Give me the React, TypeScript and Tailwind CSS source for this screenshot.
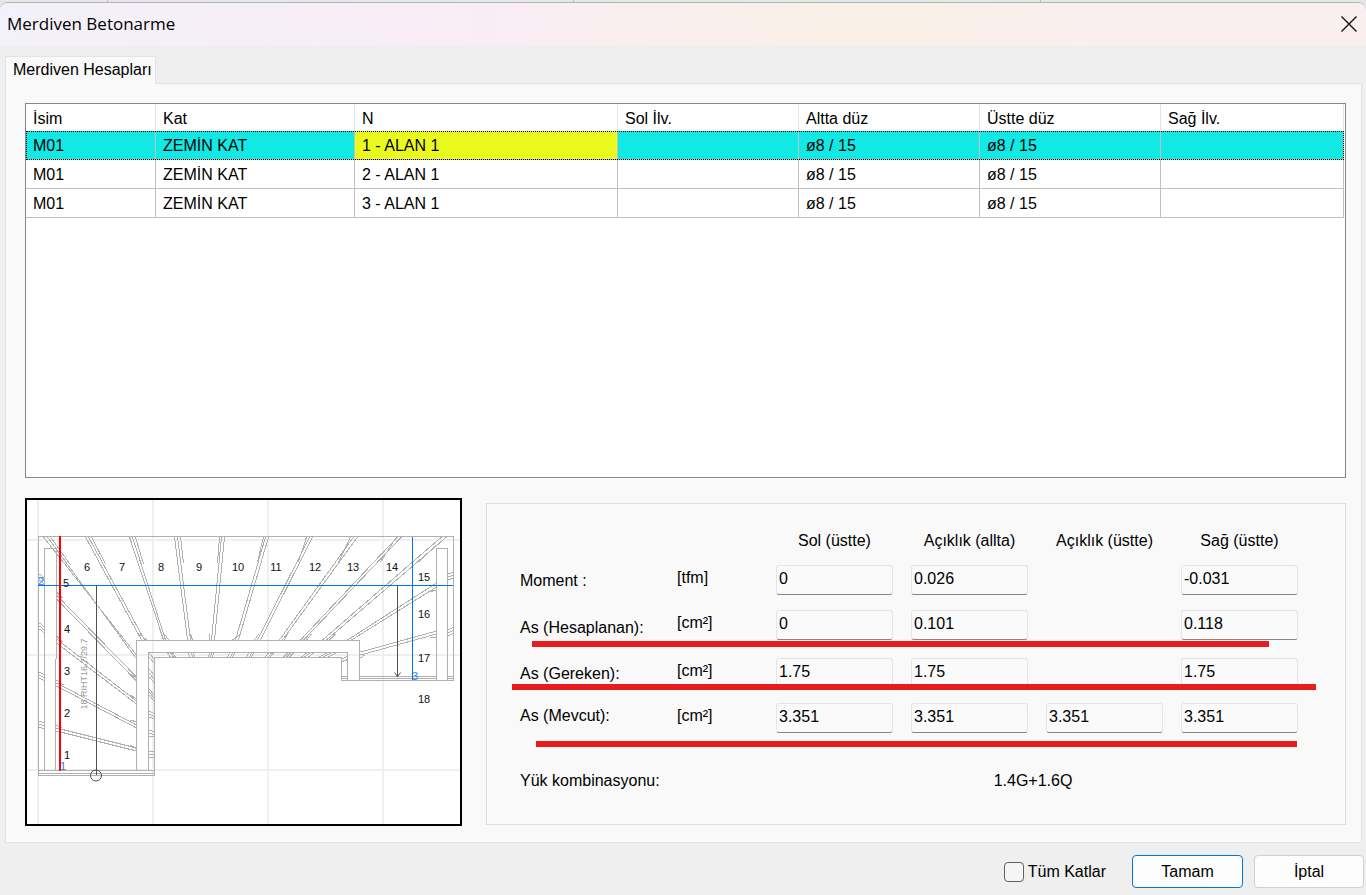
import React from 'react';
import { clsx } from 'clsx';

const COLUMNS = [
  { title: 'İsim', width: 'w-[130px]' },
  { title: 'Kat', width: 'w-[199px]' },
  { title: 'N', width: 'w-[263px]' },
  { title: 'Sol İlv.', width: 'w-[181px]' },
  { title: 'Altta düz', width: 'w-[181px]' },
  { title: 'Üstte düz', width: 'w-[181px]' },
  { title: 'Sağ İlv.', width: '' },
];

const ROWS = [
  ['M01', 'ZEMİN KAT', '1 - ALAN 1', '', 'ø8 / 15', 'ø8 / 15', ''],
  ['M01', 'ZEMİN KAT', '2 - ALAN 1', '', 'ø8 / 15', 'ø8 / 15', ''],
  ['M01', 'ZEMİN KAT', '3 - ALAN 1', '', 'ø8 / 15', 'ø8 / 15', ''],
];

const SECTIONS = ['Sol (üstte)', 'Açıklık (allta)', 'Açıklık (üstte)', 'Sağ (üstte)'];

const RESULTS = [
  { id: 'moment', label: 'Moment :', unit: '[tfm]', values: ['0', '0.026', null, '-0.031'], align: 'self-center', row: 'mt-3' },
  { id: 'hesaplanan', label: 'As (Hesaplanan):', unit: '[cm²]', values: ['0', '0.101', null, '0.118'], align: 'self-end', row: 'mt-[15px]' },
  { id: 'gereken', label: 'As (Gereken):', unit: '[cm²]', values: ['1.75', '1.75', null, '1.75'], align: 'self-center', row: 'mt-[18px]' },
  { id: 'mevcut', label: 'As (Mevcut):', unit: '[cm²]', values: ['3.351', '3.351', '3.351', '3.351'], align: 'self-start', row: 'mt-[15px]' },
];

const GRID = 'grid grid-cols-[139px_81px_repeat(4,minmax(0,117px))] gap-x-[18px]';

// Edges of the stair treads: [x1, y1, x2, y2]
const TREADS = [
  // upper flight
  [43, 537, 136, 655], [47, 537, 136, 659], [50, 537, 70, 565],
  [85, 537, 141, 640], [88, 537, 144, 640], [91, 537, 105, 564], [139, 634, 146, 640],
  [129, 537, 163, 640], [132, 537, 165, 640], [135, 537, 143, 564], [164, 634, 168, 640],
  [174, 537, 187, 640], [177, 537, 190, 640], [180, 537, 183, 563], [190, 634, 192, 640],
  [221, 537, 211, 640], [224, 537, 214, 640], [219, 537, 217, 563], [209, 634, 209, 640],
  [265, 537, 235, 640], [268, 537, 238, 640], [263, 537, 257, 562], [240, 634, 232, 640],
  [309, 537, 257, 640], [312, 537, 260, 640], [306, 537, 298, 562], [254, 640, 258, 634],
  [353, 537, 279, 640], [357, 537, 282, 640], [350, 537, 338, 562], [284, 640, 287, 634],
  [397, 537, 300, 640], [401, 537, 303, 640], [394, 540, 380, 562], [306, 640, 311, 634],
  [441, 537, 322, 640], [446, 537, 326, 640], [436, 545, 418, 562], [329, 640, 335, 634],
  // right flight
  [436, 583, 347, 640], [436, 587, 351, 640], [436, 590, 428, 592],
  [436, 631, 360, 652], [436, 634, 360, 655], [436, 637, 430, 638], [360, 658, 364, 655],
  [448, 574, 453, 572], [448, 577, 453, 575], [448, 580, 453, 578],
  [448, 630, 453, 627], [448, 633, 453, 630], [448, 636, 453, 633],
  // left flight
  [56, 595, 136, 677], [56, 599, 136, 681], [56, 592, 62, 598], [130, 674, 136, 678],
  [56, 639, 136, 701], [56, 643, 136, 704], [56, 636, 62, 642], [130, 695, 136, 699],
  [56, 683, 136, 725], [56, 686, 136, 728], [56, 680, 63, 685], [130, 720, 136, 722],
  [56, 728, 136, 748], [56, 731, 136, 751], [56, 725, 61, 728], [130, 745, 136, 749],
  [39, 574, 44, 578], [39, 577, 44, 581], [39, 580, 44, 584],
  [39, 623, 44, 627], [39, 626, 44, 630], [39, 629, 44, 633],
  [39, 672, 44, 675], [39, 675, 44, 678], [39, 678, 44, 681],
  [39, 721, 44, 723], [39, 724, 44, 726], [39, 727, 44, 729],
  // slab band
  [149, 653, 154, 660], [149, 657, 154, 664],
  [149, 669, 154, 676], [149, 673, 154, 680], [149, 677, 154, 683],
  [149, 689, 154, 696], [149, 692, 154, 699], [149, 695, 154, 702],
  [149, 711, 154, 714], [149, 714, 154, 717], [149, 717, 154, 719],
  [149, 730, 154, 732], [149, 733, 154, 735], [149, 736, 154, 737],
  [149, 751, 154, 752], [149, 754, 154, 755], [149, 757, 154, 758],
  [167, 653, 170, 657], [170, 653, 173, 657], [172, 653, 175, 657],
  [188, 653, 189, 657], [191, 653, 192, 657], [193, 653, 194, 657],
  [209, 653, 208, 657], [211, 653, 210, 657], [213, 653, 212, 657],
  [229, 653, 227, 657], [232, 653, 230, 657], [234, 653, 232, 657],
  [248, 653, 246, 657], [251, 653, 249, 657], [253, 653, 251, 657],
  [268, 653, 265, 657], [271, 653, 268, 657], [273, 653, 270, 657],
  [287, 653, 283, 657], [290, 653, 286, 657], [293, 653, 289, 657],
  [306, 653, 301, 657], [309, 653, 304, 657], [313, 653, 308, 657],
  [326, 653, 319, 657], [330, 653, 323, 657], [335, 653, 328, 657],
  [342, 659, 347, 656], [342, 662, 347, 659], [342, 660, 347, 660],
];

const STEP_LABELS: [string, number, number][] = [
  ['1', 67, 759], ['2', 67, 717], ['3', 67, 675], ['4', 67, 633], ['5', 66, 587],
  ['6', 87, 571], ['7', 122, 571], ['8', 161, 571], ['9', 199, 571], ['10', 238, 571],
  ['11', 276, 571], ['12', 315, 571], ['13', 353, 571], ['14', 392, 571],
  ['15', 424, 581], ['16', 424, 618], ['17', 424, 662], ['18', 424, 703],
];

const StairPlan: React.FC = () => (
  <svg viewBox="27 500 433 324" className="block w-full" role="img" aria-label="Merdiven planı">
    <path d="M38 500V824M153 500V824M268 500V824M383 500V824M27 540H460M27 655H460M27 770H460" stroke="#efefef" strokeWidth="2" />

    <g stroke="#b0b0b0" strokeWidth="1" fill="none" shapeRendering="crispEdges">
      {TREADS.map(([x1, y1, x2, y2], i) => (
        <line key={i} x1={x1 + 0.5} y1={y1} x2={x2 + 0.5} y2={y2} />
      ))}
      {/* outer edge */}
      <path d="M154.5 775.5H38.5V536.5H453.5V680.5H341.5V657.5H154.5V775.5" />
      <path d="M38.5 770.5H154.5M38.5 773.5H154.5" />
      <path d="M341.5 676.5H347.5M341.5 678.5H347.5M359.5 676.5H436.5M359.5 678.5H436.5M447.5 676.5H453.5M447.5 678.5H453.5" />
      {/* stringers */}
      <path d="M44.5 770V548.5H56.5V658L55.5 660V770" />
      <path d="M136.5 770V640.5H359.5V680" />
      <path d="M148.5 770V652.5H347.5V680" />
      <path d="M436.5 680V548.5H447.5V680" />
    </g>

    <g stroke="#505050" fill="none">
      <path d="M96.5 586V775M397.5 586V677" />
      <circle cx="96" cy="775.5" r="5.5" />
      <path d="M394.5 672.5L397.5 676.5L400.5 672.5" />
    </g>

    <path d="M38 585.5H453M412.5 537V680" stroke="#0070ff" />
    <path d="M60 536V771" stroke="#ff0000" strokeWidth="2" />

    <g className="font-['Liberation_Sans',Arial,sans-serif]" fontSize="11" textAnchor="middle">
      {STEP_LABELS.map(([label, x, y]) => (
        <text key={label} x={x} y={y} fill="#111111">{label}</text>
      ))}
      <g fill="#2a7ff0">
        <text x="41" y="585">2</text>
        <text x="63" y="770">1</text>
        <text x="415" y="680">3</text>
      </g>
      <text transform="translate(87 674) rotate(-90)" fontSize="9" fill="#999999">18 RIHT16.7/29.7</text>
    </g>
  </svg>
);

const ReinforcementTable: React.FC = () => (
  <div className="flex-1 border border-[#828790] bg-white pr-px">
    <table className="w-full table-fixed border-separate border-spacing-0 text-left">
      <thead>
        <tr className="h-[27px]">
          {COLUMNS.map((col) => (
            <th key={col.title} className={clsx('border-r border-[#e5e5e5] pt-0.5 pl-[7px] font-normal', col.width)}>
              {col.title}
            </th>
          ))}
        </tr>
      </thead>
      <tbody>
        {ROWS.map((row, r) => (
          <tr
            key={r}
            className={clsx('h-[29px]', r === 0 && 'bg-[#12e8e4] outline-1 -outline-offset-1 outline-dotted outline-black')}
          >
            {row.map((cell, c) => (
              <td
                key={c}
                className={clsx('border-r border-b border-[#c0c0c0] pt-0.5 pl-[7px]', r === 0 && c === 2 && 'bg-[#ebfa1e]')}
              >
                {cell}
              </td>
            ))}
          </tr>
        ))}
      </tbody>
    </table>
  </div>
);

const ResultPanel: React.FC = () => (
  <section className="relative mt-[5px] mb-px flex-1 border border-[#dcdcdc] pt-[25px] pr-[47px] pl-[33px]">
    <div className={GRID}>
      {SECTIONS.map((name, i) => (
        <span key={name} id={`section-${i}`} className={clsx('text-center whitespace-nowrap', i === 0 && 'col-start-3')}>
          {name}
        </span>
      ))}
    </div>

    {RESULTS.map((result) => (
      <div key={result.id} className={clsx(GRID, result.row)}>
        <span id={result.id} className={clsx('pt-px', result.align)}>{result.label}</span>
        <span className="pt-px">{result.unit}</span>
        {result.values.map((value, i) =>
          value === null ? (
            <span key={i} />
          ) : (
            <input
              key={i}
              type="text"
              readOnly
              defaultValue={value}
              aria-labelledby={`${result.id} section-${i}`}
              className="h-[30px] w-full rounded-[3px] border border-[#e5e5e5] border-b-[#868686] bg-[#fafafa] px-[2px] pb-0.5"
            />
          )
        )}
      </div>
    ))}

    <div className={clsx(GRID, 'mt-9')}>
      <span className="whitespace-nowrap">Yük kombinasyonu:</span>
      <span className="col-span-4 col-start-3 pr-2 text-center">1.4G+1.6Q</span>
    </div>

    {/* Marker strokes */}
    <div className="absolute top-[137px] right-[76px] left-[45px] h-1.5 bg-[#e81c1c]" />
    <div className="absolute top-[180px] right-[29px] left-[25px] h-1.5 bg-[#e81c1c]" />
    <div className="absolute top-[237px] right-[48px] left-[49px] h-1.5 bg-[#e81c1c]" />
  </section>
);

export default function App() {
  return (
    <div className="flex min-h-screen flex-col bg-[#e6e8e8] font-['Liberation_Sans',Arial,sans-serif] text-base text-black">
      {/* Bottom edge of the window behind the dialog */}
      <div className="flex h-0.5">
        <div className="w-[108px] border-r border-[#b4bcc4]" />
        <div className="w-[466px] border-r border-[#b4bcc4]" />
        <div className="w-[467px] border-r border-[#b4bcc4]" />
      </div>

      <div className="flex flex-1 flex-col overflow-hidden rounded-t-lg border-t border-[#b4b4b4] bg-[#efefef]">
        {/* Title bar */}
        <header className="flex h-[43px] items-center justify-between bg-[linear-gradient(to_right,#f3f1f9,#f9edf6_33%,#f9f0e8_60%,#f9f0e8_67%,#f9eff0_82%)] pr-2 pb-0.5 pl-[7px]">
          <h1 className="font-['Open_Sans','Noto_Sans',sans-serif] text-[17px]">Merdiven Betonarme</h1>
          <button type="button" aria-label="Kapat" className="p-px">
            <svg viewBox="0 0 16 16" className="size-4" stroke="#111111" strokeWidth="1.4">
              <path d="M0.5 0.5L15.5 15.5M15.5 0.5L0.5 15.5" />
            </svg>
          </button>
        </header>

        <main className="mt-2.5 mr-1 ml-[5px] flex flex-1 flex-col">
          <div role="tablist" className="flex">
            <button
              type="button"
              role="tab"
              aria-selected="true"
              className="relative z-10 -mb-px h-7 border border-b-0 border-[#e3e3e3] bg-[#f9f9f9] pr-[3px] pb-0.5 pl-[7px]"
            >
              Merdiven Hesapları
            </button>
          </div>

          <div className="flex flex-1 flex-col gap-5 border border-[#e3e3e3] bg-[#f9f9f9] pt-[19px] pr-[15px] pb-4 pl-[19px]">
            <ReinforcementTable />
            <div className="flex gap-6">
              <figure className="w-[437px] shrink-0 self-start border-2 border-black bg-white">
                <StairPlan />
              </figure>
              <ResultPanel />
            </div>
          </div>
        </main>

        <footer className="flex items-center justify-end pt-3 pr-0.5 pb-[7px]">
          <label className="mr-[26px] flex items-center gap-1">
            <input type="checkbox" className="size-5 appearance-none rounded border border-[#626262] bg-[#f5f5f5]" />
            Tüm Katlar
          </label>
          <button type="button" className="mr-[11px] h-[33px] w-[111px] rounded border border-[#0078d4] bg-[#fdfdfd]">
            Tamam
          </button>
          <button type="button" className="h-[33px] w-[110px] rounded border border-[#d0d0d0] bg-[#fdfdfd]">
            İptal
          </button>
        </footer>
      </div>
    </div>
  );
}
